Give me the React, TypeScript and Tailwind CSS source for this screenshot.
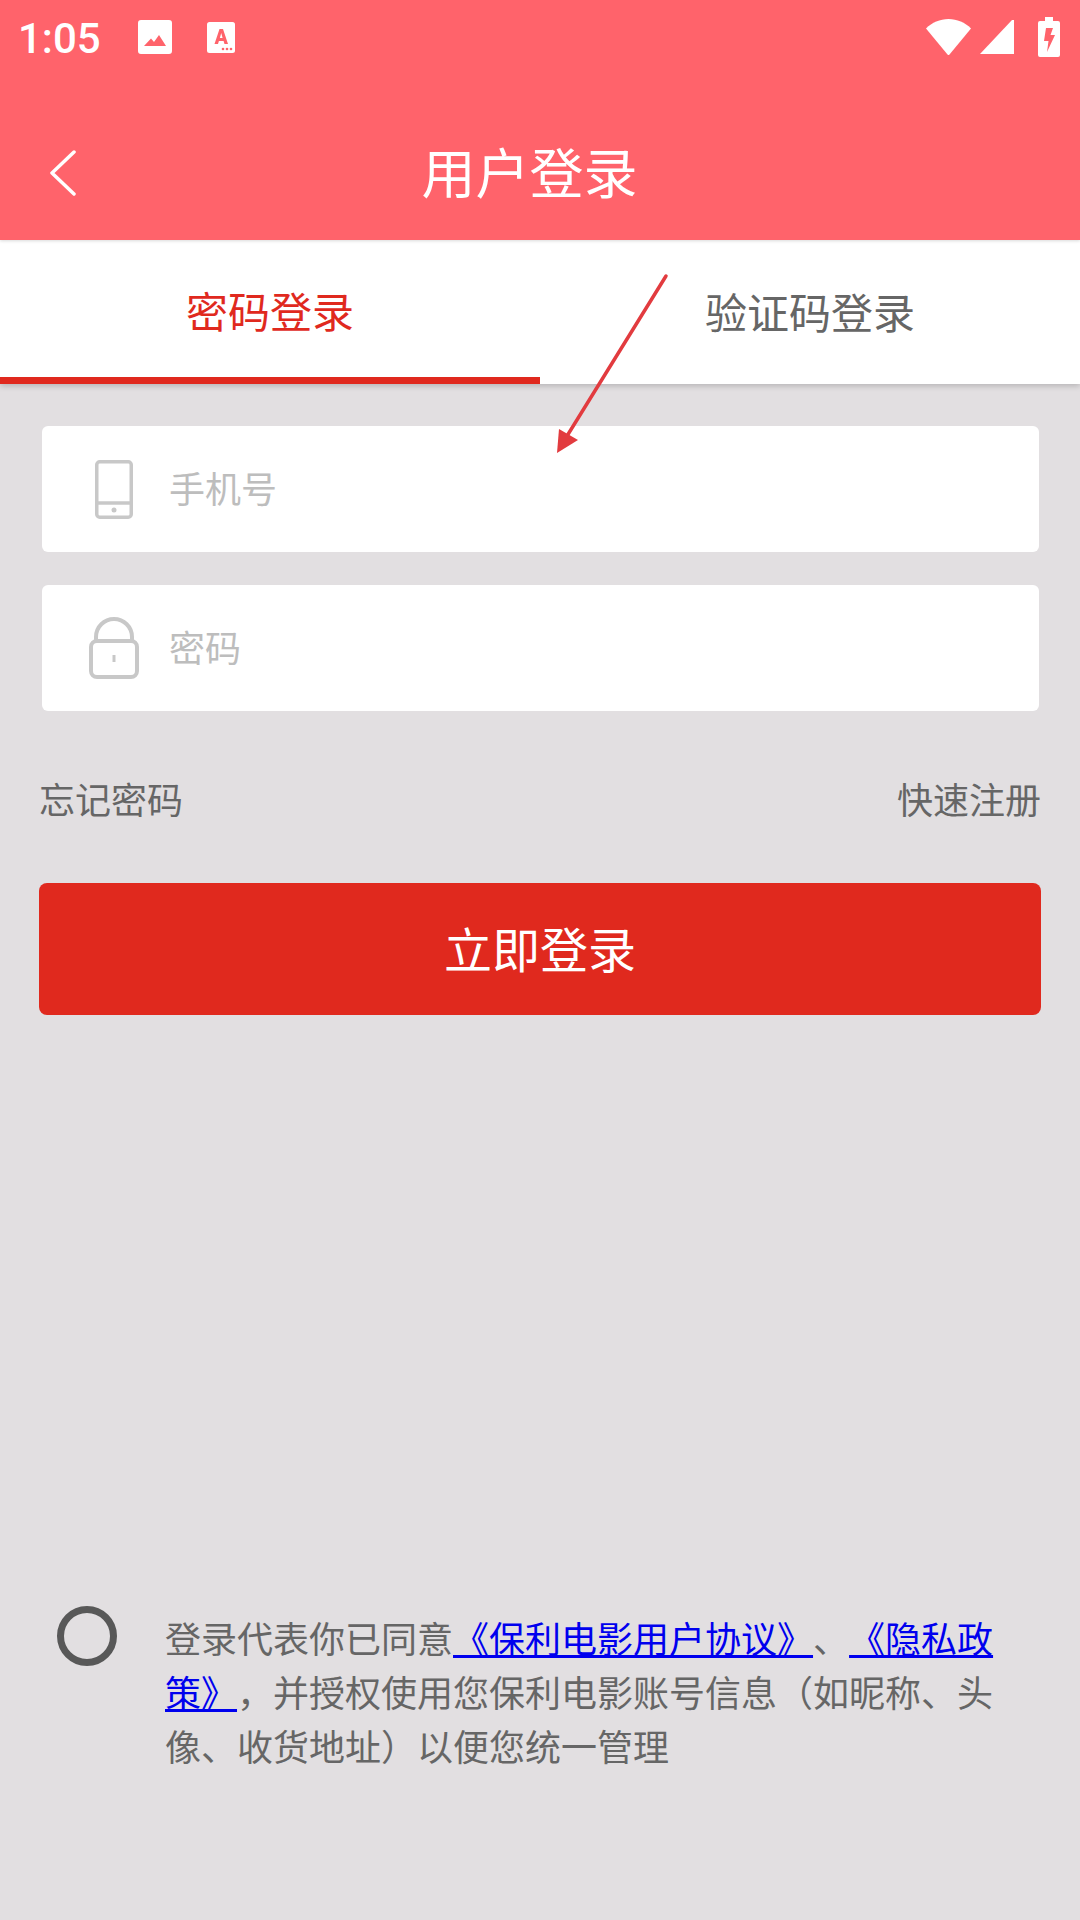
import React from 'react';

const cjk = 'font-["Noto_Sans_CJK_SC","Noto_Sans",sans-serif]';

const StatusBar = () => (
    <div className="flex h-[74px] items-center pl-[18px] pr-[20px] text-white">
        <span className='font-["Roboto",sans-serif] pt-[3px] text-[42px] font-medium leading-none mr-[37px]'>1:05</span>
        <svg className="mr-[35px]" width="34" height="34" viewBox="0 0 34 34">
            <path
                fillRule="evenodd"
                fill="#fff"
                d="M3 0h28a3 3 0 0 1 3 3v28a3 3 0 0 1-3 3H3a3 3 0 0 1-3-3V3a3 3 0 0 1 3-3zM6 26h22l-7-11-5 7-3-3.500z"
            />
        </svg>
        <svg width="28" height="31" viewBox="0 0 28 31">
            <rect width="28" height="31" rx="2.500" fill="#fff" />
            <path d="M7.500 22 12.500 7h3.500L21 22h-3.500l-.9-3h-4.700l-.9 3zM12.900 16h2.700L14.200 11z" fill="#ff636b" fillRule="evenodd" />
            <circle cx="16" cy="27" r="1.300" fill="#ff636b" />
            <circle cx="20" cy="27" r="1.300" fill="#ff636b" />
            <circle cx="24" cy="27" r="1.300" fill="#ff636b" />
        </svg>
        <div className="ml-auto flex items-center">
            <svg className="mr-[9px]" width="45" height="36" viewBox="0 0 45 36">
                <path d="M0 9.500C6 3.500 14 0 22.500 0S39 3.500 45 9.500L23.500 35.500a1.300 1.300 0 0 1-2 0z" fill="#fff" />
            </svg>
            <svg className="mr-[24px]" width="34" height="34" viewBox="0 0 34 34">
                <path d="M32 0h2v34H0z" fill="#fff" />
            </svg>
            <svg width="22" height="40" viewBox="0 0 22 40">
                <path
                    fillRule="evenodd"
                    fill="#fff"
                    d="M7 0h8v4h5a2 2 0 0 1 2 2v32a2 2 0 0 1-2 2H2a2 2 0 0 1-2-2V6a2 2 0 0 1 2-2h5zM8 11l-2 13h4.500L9 35l8-17h-4.500L15 11z"
                />
            </svg>
        </div>
    </div>
);

const Header = () => (
    <div className="flex h-[240px] flex-col bg-[#ff636b] shadow-[0_1px_3px_rgba(0,0,0,0.15)] relative z-20">
        <StatusBar />
        <div className="flex flex-1 items-center pl-[49px] pt-[28px]">
            <svg className="mt-[3px]" width="28" height="46" viewBox="0 0 28 46" fill="none" stroke="#fff" strokeWidth="3.500" strokeLinecap="round" strokeLinejoin="round">
                <path d="M25 2 3 23l22 21" />
            </svg>
            <div className={`flex-1 pr-[98px] text-center text-[54px] leading-none text-white ${cjk}`}>用户登录</div>
        </div>
    </div>
);

const Tabs = () => (
    <div className={`relative z-10 flex h-[144px] bg-white shadow-[0_2px_6px_rgba(0,0,0,0.2)] ${cjk}`}>
        <div className="flex flex-1 items-center justify-center border-b-[7px] border-[#e0291e] pt-[2px] text-[42px] text-[#e0291e]">
            密码登录
        </div>
        <div className="flex flex-1 items-center justify-center pb-[3px] text-[42px] text-[#666666]">验证码登录</div>
    </div>
);

const InputRow = ({ icon, placeholder }: { icon: React.ReactNode; placeholder: string }) => (
    <div className="flex h-[126px] items-center rounded-[6px] bg-white">
        <div className="flex w-[127px] justify-center pl-[17px]">{icon}</div>
        <span className={`pb-[4px] text-[36px] leading-none text-[#bdbdbd] ${cjk}`}>{placeholder}</span>
    </div>
);

const PhoneIcon = () => (
    <svg width="38" height="59" viewBox="0 0 38 59" fill="none" stroke="#c8c8c8" strokeWidth="3.500">
        <rect x="1.750" y="1.750" width="34.500" height="55.500" rx="3" />
        <path d="M2 43h34" />
        <circle cx="19" cy="50" r="2.500" fill="#c8c8c8" stroke="none" />
    </svg>
);

const LockIcon = () => (
    <svg width="50" height="62" viewBox="0 0 50 62" fill="none" stroke="#c8c8c8" strokeWidth="4">
        <path d="M7 24v-4a18 18 0 0 1 36 0v4" />
        <rect x="2" y="24" width="46" height="36" rx="6" />
        <path d="M25 38v7" strokeWidth="3" />
    </svg>
);

const LoginForm = () => (
    <div className="flex flex-col pl-[42px] pr-[41px] pt-[42px]">
        <div className="flex flex-col gap-[33px]">
            <InputRow icon={<PhoneIcon />} placeholder="手机号" />
            <InputRow icon={<LockIcon />} placeholder="密码" />
        </div>
        <div className={`-ml-[3px] -mr-[2px] mt-[65px] flex justify-between text-[36px] leading-[44px] text-[#666666] ${cjk}`}>
            <span>忘记密码</span>
            <span>快速注册</span>
        </div>
        <button className={`-ml-[3px] -mr-[2px] mt-[63px] flex h-[132px] items-center justify-center rounded-[8px] bg-[#e0291e] pb-[4px] text-[48px] leading-none text-white ${cjk}`}>
            立即登录
        </button>
    </div>
);

const Agreement = () => (
    <div className="mt-auto flex pb-[148px] pl-[57px]">
        <div className="mt-[-1px] h-[60px] w-[60px] shrink-0 rounded-full border-[7px] border-[#585858]" />
        <p lang="zh-CN" className={`ml-[48px] w-[840px] pt-[3px] text-[36px] leading-[54px] text-[#666666] [text-spacing-trim:space-all] ${cjk}`}>
            登录代表你已同意<span className="text-[#0000ee] underline">《保利电影用户协议》</span>、<span className="text-[#0000ee] underline">《隐私政策》</span>，并授权使用您保利电影账号信息（如昵称、头像、收货地址）以便您统一管理
        </p>
    </div>
);

const App: React.FC = () => {
    return (
        <div lang="zh-CN" className="relative flex h-[1920px] w-[1080px] flex-col overflow-hidden bg-[#e2dfe1]">
            <Header />
            <Tabs />
            <LoginForm />
            <Agreement />
            {/* red annotation arrow drawn over the page */}
            <svg className="absolute left-[540px] top-[260px] z-30" width="140" height="200" viewBox="0 0 140 200">
                <path d="M126 16 27 176" stroke="#e23b3f" strokeWidth="3.500" strokeLinecap="round" />
                <path d="M19 169 38 180 17 193z" fill="#e23b3f" />
            </svg>
        </div>
    );
};

export default App;
